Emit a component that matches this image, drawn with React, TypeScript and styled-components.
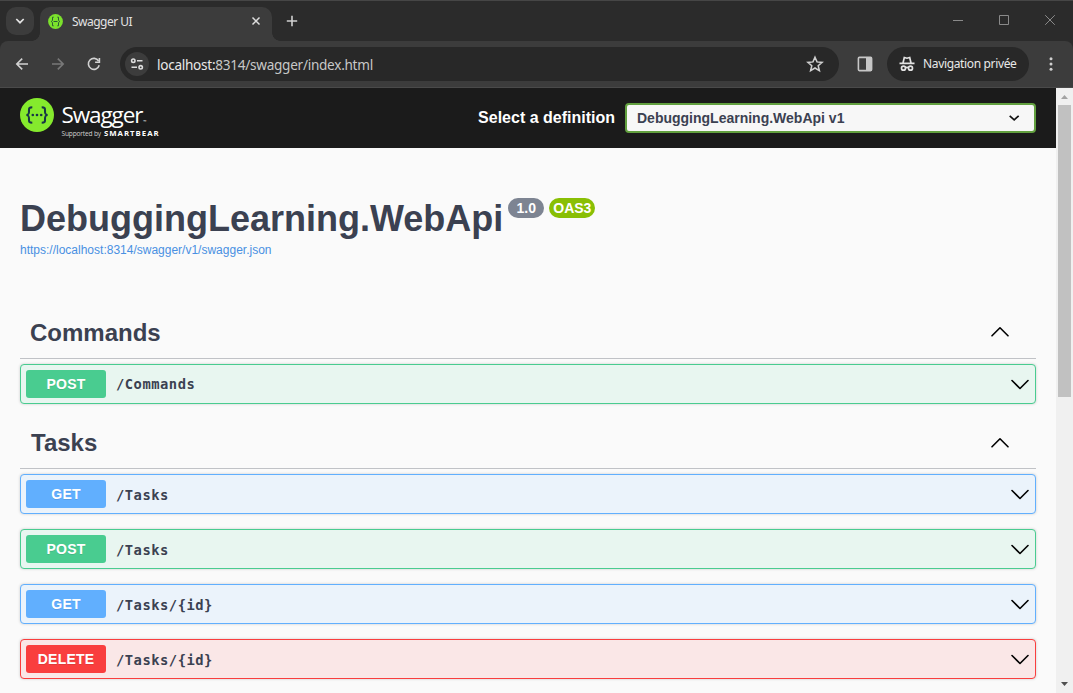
import React from 'react';
import styled, { createGlobalStyle } from 'styled-components';

const ui = '"Noto Sans", "Open Sans", sans-serif';
const sans = '"Liberation Sans", Arial, sans-serif';

const GlobalStyle = createGlobalStyle`
  *, *::before, *::after { box-sizing: border-box; }
  body { margin: 0; background: #fafafa; font-family: ${sans}; color: #3b4151; overflow: hidden; }
  svg { display: block; flex: none; }
`;

const Window = styled.div`
  display: flex;
  flex-direction: column;
  width: 1073px;
  height: 693px;
  overflow: hidden;
`;

const TabStrip = styled.div`
  display: flex;
  height: 41px;
  flex: none;
  background: #2b2b2b;
  border-top: 1px solid #464646;
  padding: 6px 0 0 6px;
`;

const TabSearch = styled.div`
  display: grid;
  place-items: center;
  width: 28px;
  height: 28px;
  border-radius: 10px;
  background: #3c3c3c;
`;

const Tab = styled.div`
  position: relative;
  display: flex;
  align-items: center;
  width: 232px;
  height: 34px;
  margin-left: 6px;
  padding: 0 11px 6px 8px;
  border-radius: 10px 10px 0 0;
  background: #3c3c3c;
  &::before, &::after {
    content: '';
    position: absolute;
    bottom: 0;
    width: 8px;
    height: 8px;
  }
  &::before {
    left: -8px;
    background: radial-gradient(circle at 0 0, transparent 7.5px, #3c3c3c 8px);
  }
  &::after {
    right: -8px;
    background: radial-gradient(circle at 100% 0, transparent 7.5px, #3c3c3c 8px);
  }
`;

const TabTitle = styled.span`
  flex: 1;
  margin-left: 9px;
  padding-top: 2px;
  font: 12px/16px ${ui};
  letter-spacing: -0.52px;
  color: #e3e3e3;
`;

const NewTab = styled.div`
  margin: 8px 0 0 14px;
`;

const WindowButtons = styled.div`
  display: flex;
  gap: 36px;
  margin: 8px 18px 0 auto;
`;

const ToolbarBack = styled.div`
  flex: none;
  background: #2b2b2b;
`;

const Toolbar = styled.div`
  display: flex;
  align-items: center;
  height: 47px;
  padding: 0 14px 1px 14px;
  border-bottom: 1px solid #4a4a4a;
  border-radius: 8px 8px 0 0;
  background: #3c3c3c;
`;

const NavButtons = styled.div`
  display: flex;
  gap: 20px;
`;

const AddressBar = styled.div`
  display: flex;
  align-items: center;
  width: 719px;
  height: 34px;
  margin-left: 18px;
  padding: 0 15px 0 5px;
  border-radius: 17px;
  background: #282828;
`;

const SiteInfo = styled.div`
  display: grid;
  place-items: center;
  width: 24px;
  height: 24px;
  border-radius: 50%;
  background: #3c3c3c;
`;

const Url = styled.span`
  flex: 1;
  margin-left: 8px;
  padding-top: 2px;
  font: 13.6px/20px ${ui};
  letter-spacing: -0.28px;
  color: #c7c7c7;
`;

const Host = styled.span`
  color: #e8e8e8;
`;

const Incognito = styled.div`
  display: flex;
  align-items: center;
  width: 142px;
  height: 34px;
  margin: 0 14px 0 14px;
  padding-left: 12px;
  border-radius: 17px;
  background: #282828;
  font: 12px/16px ${ui};
  letter-spacing: -0.35px;
  color: #e8e8e8;
  white-space: nowrap;
  gap: 8px;
`;

const PanelIcon = styled.div`
  margin-left: 18px;
`;

const Viewport = styled.div`
  display: flex;
  flex: 1;
  min-height: 0;
`;

const Page = styled.div`
  flex: 1;
  background: #fafafa;
`;

const TopBar = styled.header`
  display: flex;
  align-items: center;
  height: 60px;
  padding: 0 20px;
  background: #1b1b1b;
`;

const Logo = styled.div`
  display: flex;
  align-items: flex-start;
  height: 44px;
  margin-top: 4px;
  gap: 7.5px;
`;

const LogoText = styled.div`
  display: flex;
  flex-direction: column;
  color: #fff;
  white-space: nowrap;
`;

const LogoName = styled.div`
  display: flex;
  align-items: baseline;
  height: 31px;
  font: 22.5px/34px "Open Sans", sans-serif;
  letter-spacing: -1.1px;
`;

const LogoMark = styled.span`
  font-size: 4px;
  letter-spacing: 0;
  margin-left: 1px;
`;

const LogoTagline = styled.div`
  display: flex;
  align-items: baseline;
  gap: 3px;
  font: 6.6px/9px "Open Sans", sans-serif;
  letter-spacing: -0.18px;
  color: #d0d0d0;
`;

const LogoCompany = styled.span`
  font: 700 7.8px/9px "Open Sans", sans-serif;
  letter-spacing: 1px;
  color: #fff;
`;

const DefinitionLabel = styled.span`
  margin: 0 10px 0 auto;
  font: 700 16px/20px ${sans};
  color: #fff;
`;

const DefinitionSelect = styled.div`
  display: flex;
  align-items: center;
  justify-content: space-between;
  width: 411px;
  height: 30px;
  padding: 0 14px 0 10px;
  border: 2px solid #62a03f;
  border-radius: 4px;
  background: #f7f7f7;
  font: 700 14px/20px ${sans};
  color: #3b4151;
`;

const Info = styled.section`
  height: 161px;
  padding: 50px 20px 0;
`;

const TitleRow = styled.div`
  display: flex;
  align-items: flex-start;
  height: 42px;
`;

const Title = styled.h1`
  margin: 0 5px 0 0;
  font: 700 36px/41px ${sans};
`;

const Badge = styled.span<{ $color: string; $width: number }>`
  width: ${(p) => p.$width}px;
  height: 20px;
  margin-right: 5px;
  border-radius: 10px;
  background: ${(p) => p.$color};
  font: 700 14px/21px ${sans};
  text-align: center;
  color: #fff;
`;

const SpecLink = styled.a`
  display: block;
  margin-top: 2px;
  padding-top: 1px;
  font: 12px/14px ${sans};
  color: #4990e2;
`;

const Section = styled.section`
  padding: 0 20px;
`;

const SectionHeader = styled.div<{ $indent: number }>`
  display: flex;
  align-items: center;
  justify-content: space-between;
  height: 50px;
  margin-bottom: 5px;
  padding: 0 27px 2px ${(p) => p.$indent}px;
  border-bottom: 1px solid rgba(59, 65, 81, 0.3);
`;

const SectionTitle = styled.h3`
  margin: 0;
  font: 700 24px/28px ${sans};
`;

const SectionToggle = styled.div<{ $lift: number }>`
  padding-bottom: ${(p) => p.$lift}px;
`;

const Operation = styled.div<{ $color: string; $fill: string }>`
  display: flex;
  align-items: center;
  height: 40px;
  margin-bottom: 15px;
  padding: 0 6px 0 5px;
  border: 1px solid ${(p) => p.$color};
  border-radius: 4px;
  background: ${(p) => p.$fill};
  box-shadow: 0 0 3px rgba(0, 0, 0, 0.19);
`;

const Method = styled.span<{ $color: string }>`
  width: 80px;
  height: 28px;
  border-radius: 3px;
  background: ${(p) => p.$color};
  font: 700 14px/28px ${sans};
  letter-spacing: 0.2px;
  text-align: center;
  text-shadow: 0 1px 0 rgba(0, 0, 0, 0.1);
  color: #fff;
`;

const Path = styled.span<{ $drop: number }>`
  flex: 1;
  margin-left: 10px;
  padding-top: ${(p) => p.$drop}px;
  font: 700 13.8px/20px "DejaVu Sans Mono", monospace;
  letter-spacing: 0.5px;
`;

const ScrollTrack = styled.div`
  display: flex;
  flex-direction: column;
  align-items: center;
  justify-content: space-between;
  width: 17px;
  background: #f0f0f0;
`;

const ScrollThumb = styled.div`
  width: 13px;
  height: 292px;
  margin-bottom: auto;
  background: #c1c1c1;
`;

const Chevron = ({ up = false }: { up?: boolean }) => (
  <svg width="18" height="12" viewBox="0 0 18 12" fill="none" stroke="#000" strokeWidth="1.6" strokeLinecap="round" strokeLinejoin="round">
    <path d={up ? 'M1 9.8 9 1.8l8 8' : 'M1 2.5l8 8 8-8'} />
  </svg>
);

const kinds = {
  POST: { color: '#49cc90', fill: '#e8f6f0' },
  GET: { color: '#61affe', fill: '#ebf3fb' },
  DELETE: { color: '#f93e3e', fill: '#fae7e7' },
};

type Op = { method: keyof typeof kinds; path: string };

const sections: { name: string; indent: number; lift: number; drop: number; ops: Op[] }[] = [
  { name: 'Commands', indent: 10, lift: 2, drop: 0, ops: [{ method: 'POST', path: '/Commands' }] },
  {
    name: 'Tasks',
    indent: 11,
    lift: 0,
    drop: 2,
    ops: [
      { method: 'GET', path: '/Tasks' },
      { method: 'POST', path: '/Tasks' },
      { method: 'GET', path: '/Tasks/{id}' },
      { method: 'DELETE', path: '/Tasks/{id}' },
    ],
  },
];

const Braces = ({ size }: { size: number }) => (
  <svg width={size} height={size} viewBox="0 0 34 34">
    <circle cx="17" cy="17" r="17" fill="#85ea2d" />
    <g fill="none" stroke="#173647" strokeWidth="2.1">
      <path d="M12.3 9.2c-3 0-3.4.9-3.3 3.2.1 2.6.1 4.2-2.5 4.6 2.6.4 2.6 2 2.5 4.6-.1 2.3.3 3.2 3.3 3.2" />
      <path d="M21.7 9.2c3 0 3.4.9 3.3 3.2-.1 2.6-.1 4.2 2.5 4.6-2.6.4-2.6 2-2.5 4.6.1 2.3-.3 3.2-3.3 3.2" />
    </g>
    <g fill="#173647">
      <circle cx="12.8" cy="17" r="1.3" />
      <circle cx="17" cy="17" r="1.3" />
      <circle cx="21.2" cy="17" r="1.3" />
    </g>
  </svg>
);

const Favicon = () => (
  <svg width="15" height="15" viewBox="0 0 15 15">
    <circle cx="7.5" cy="7.5" r="7.4" fill="#7be12c" />
    <path d="M5.7 3.2H4.5v3.3l-1.3 1 1.3 1v3.300h1.200M9.300 3.200h1.200v3.300l1.300 1-1.300 1v3.300H9.300" fill="none" stroke="#2c5c34" />
    <path d="M5.5 7.5h4" stroke="#2c5c34" />
  </svg>
);

export default function App() {
  return (
    <>
      <GlobalStyle />
      <Window>
        <TabStrip>
          <TabSearch>
            <svg width="10" height="8" viewBox="0 0 10 8" fill="none" stroke="#e3e3e3" strokeWidth="1.7"><path d="M1.3 2 5 5.7 8.7 2" /></svg>
          </TabSearch>
          <Tab>
            <Favicon />
            <TabTitle>Swagger UI</TabTitle>
            <svg width="10" height="10" viewBox="0 0 10 10" stroke="#dedede" strokeWidth="1.5"><path d="M1.5 1.5l7 7M8.5 1.5l-7 7" /></svg>
          </Tab>
          <NewTab>
            <svg width="12" height="12" viewBox="0 0 12 12" stroke="#d0d0d0" strokeWidth="1.6"><path d="M6 .8v10.4M.8 6h10.4" /></svg>
          </NewTab>
          <WindowButtons>
            <svg width="10" height="10" viewBox="0 0 10 10" stroke="#8a8a8a"><path d="M0 5.5h10" /></svg>
            <svg width="10" height="10" viewBox="0 0 10 10" fill="none" stroke="#8a8a8a"><path d="M.5.5h9v9h-9z" /></svg>
            <svg width="10" height="10" viewBox="0 0 10 10" stroke="#8a8a8a"><path d="M.2.2l9.6 9.6M9.8.2.2 9.8" /></svg>
          </WindowButtons>
        </TabStrip>
        <ToolbarBack>
          <Toolbar>
            <NavButtons>
              <svg width="16" height="16" viewBox="0 0 16 16" fill="none" stroke="#d2d2d2" strokeWidth="1.6"><path d="M14 8H3M8.2 2.6 2.8 8l5.4 5.4" /></svg>
              <svg width="16" height="16" viewBox="0 0 16 16" fill="none" stroke="#787878" strokeWidth="1.6"><path d="M2 8h11M7.8 2.6 13.2 8l-5.4 5.4" /></svg>
              <svg width="16" height="16" viewBox="0 0 16 16" fill="none" stroke="#d2d2d2" strokeWidth="1.6">
                <path d="M13.2 9.3A5.5 5.5 0 1 1 12.6 5" />
                <path d="M13.4 1.9v4.3H9.1" />
              </svg>
            </NavButtons>
            <AddressBar>
              <SiteInfo>
                <svg width="14" height="12" viewBox="0 0 14 12" fill="none" stroke="#dcdcdc" strokeWidth="1.6">
                  <circle cx="3.3" cy="2.7" r="1.7" />
                  <path d="M7 2.7h5.500M1.500 9.300H7" />
                  <circle cx="10.7" cy="9.3" r="1.7" />
                </svg>
              </SiteInfo>
              <Url><Host>localhost:</Host>8314/swagger/index.html</Url>
              <svg width="18" height="18" viewBox="0 0 18 18" fill="none" stroke="#d0d0d0" strokeWidth="1.5">
                <path d="M9 2.2l2 4.7 5.1.5-3.9 3.3 1.2 5L9 13l-4.4 2.7 1.2-5L1.9 7.4 7 6.9z" />
              </svg>
            </AddressBar>
            <PanelIcon>
              <svg width="16" height="16" viewBox="0 0 16 16">
                <rect x="1.4" y="1.4" width="13.2" height="13.2" rx="1" fill="none" stroke="#c7c7c7" strokeWidth="1.6" />
                <path d="M9 1h6v14H9z" fill="#c7c7c7" />
              </svg>
            </PanelIcon>
            <Incognito>
              <svg width="16" height="16" viewBox="0 0 16 16" fill="none" stroke="#e3e3e3" strokeWidth="1.7">
                <path d="M.5 7.300h15M4 7l1.300-5.500L8 2.200l2.700-.7L12 7" />
                <circle cx="4.5" cy="12.2" r="2" />
                <circle cx="11.5" cy="12.2" r="2" />
                <path d="M6.400 11.800c1-.6 2.200-.6 3.200 0" />
              </svg>
              Navigation privée
            </Incognito>
            <svg width="16" height="16" viewBox="0 0 16 16" fill="#d0d0d0">
              <circle cx="8" cy="2.8" r="1.5" /><circle cx="8" cy="8" r="1.5" /><circle cx="8" cy="13.2" r="1.5" />
            </svg>
          </Toolbar>
        </ToolbarBack>
        <Viewport>
          <Page>
            <TopBar>
              <Logo>
                <Braces size={34} />
                <LogoText>
                  <LogoName>Swagger<LogoMark>™</LogoMark></LogoName>
                  <LogoTagline>Supported by<LogoCompany>SMARTBEAR</LogoCompany></LogoTagline>
                </LogoText>
              </Logo>
              <DefinitionLabel>Select a definition</DefinitionLabel>
              <DefinitionSelect>
                DebuggingLearning.WebApi v1
                <svg width="11" height="8" viewBox="0 0 11 8" fill="none" stroke="#111" strokeWidth="1.7"><path d="M.7 1.800l4.500 4 4.500-4" /></svg>
              </DefinitionSelect>
            </TopBar>
            <Info>
              <TitleRow>
                <Title>DebuggingLearning.WebApi</Title>
                <Badge $color="#7d8492" $width={36}>1.0</Badge>
                <Badge $color="#89bf04" $width={46}>OAS3</Badge>
              </TitleRow>
              <SpecLink>https://localhost:8314/swagger/v1/swagger.json</SpecLink>
            </Info>
            {sections.map((s) => (
              <Section key={s.name}>
                <SectionHeader $indent={s.indent}>
                  <SectionTitle>{s.name}</SectionTitle>
                  <SectionToggle $lift={s.lift}>
                    <Chevron up />
                  </SectionToggle>
                </SectionHeader>
                {s.ops.map((op) => (
                  <Operation key={op.method + op.path} $color={kinds[op.method].color} $fill={kinds[op.method].fill}>
                    <Method $color={kinds[op.method].color}>{op.method}</Method>
                    <Path $drop={s.drop}>{op.path}</Path>
                    <Chevron />
                  </Operation>
                ))}
              </Section>
            ))}
          </Page>
          <ScrollTrack>
            <svg width="17" height="17" viewBox="0 0 17 17"><path d="M5 11h7L8.5 7z" fill="#a3a3a3" /></svg>
            <ScrollThumb />
            <svg width="17" height="17" viewBox="0 0 17 17"><path d="M5 6h7l-3.5 4z" fill="#505050" /></svg>
          </ScrollTrack>
        </Viewport>
      </Window>
    </>
  );
}
